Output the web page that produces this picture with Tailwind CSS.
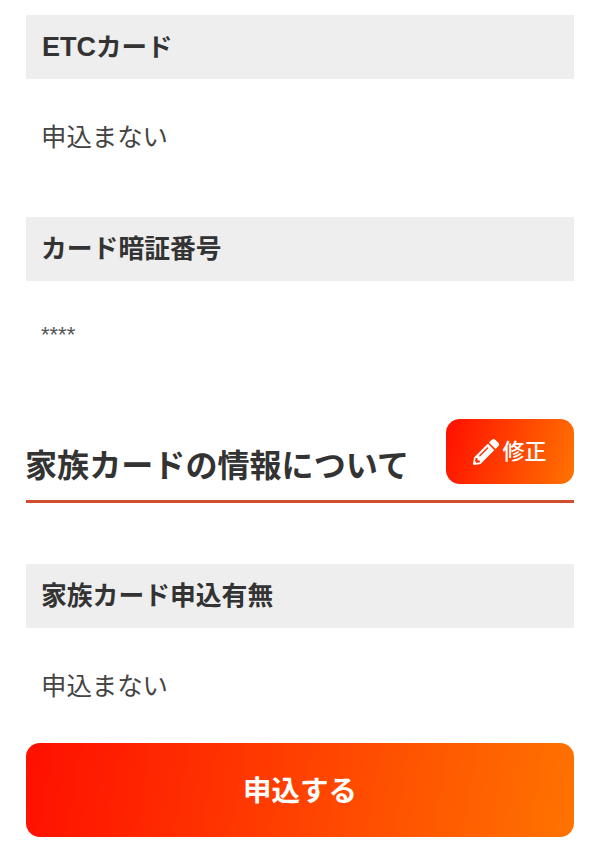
<!DOCTYPE html>
<html lang="ja">

<head>
  <meta charset="UTF-8">
  <meta name="viewport" content="width=device-width, initial-scale=1.0">
  <title>申込内容の確認</title>
  <script src="https://cdn.jsdelivr.net/npm/@tailwindcss/browser@4"></script>
</head>

<body class="bg-white text-[#333] font-['Liberation_Sans','Noto_Sans_CJK_JP',sans-serif] overflow-hidden">
  <main class="h-[865px] px-[26px] pt-[15px]">
    <h3 class="h-16 bg-[#eeeeee] pl-4 flex items-center text-[25.5px] font-bold"><span><span class="text-[27px]">ETC</span>カード</span></h3>
    <p class="h-[138px] pl-[15px] pt-10 text-[25.4px] leading-[36px] text-[#444]">申込まない</p>

    <h3 class="h-16 bg-[#eeeeee] pl-[15px] flex items-center text-[25.8px] font-bold">カード暗証番号</h3>
    <p class="h-[137px] pl-[15px] pt-[42px] text-[22px] leading-6 text-[#555]">****</p>

    <div class="relative h-[85px] border-b-[3px] border-[#d0502e]">
      <h2 class="absolute -left-px bottom-[11px] text-[32.1px] leading-[46px] font-bold whitespace-nowrap">家族カードの情報について</h2>
      <button class="absolute right-0 top-px w-[128px] h-[65px] rounded-[14px] bg-[linear-gradient(105deg,#ff0f00,#ff7300)] text-white flex items-center justify-center gap-[3px] text-[22px] font-medium">
        <svg class="w-[26px] h-[26px]" viewBox="0 0 512 512" fill="currentColor">
          <path d="M497.9 142.1l-46.1 46.1c-4.7 4.7-12.3 4.7-17 0l-111-111c-4.7-4.7-4.7-12.3 0-17l46.1-46.1c18.7-18.7 49.1-18.7 67.9 0l60.1 60.1c18.8 18.7 18.8 49.1 0 67.9zM284.2 99.8L21.6 362.4.4 483.9c-2.9 16.4 11.4 30.6 27.8 27.8l121.5-21.3 262.6-262.6c4.7-4.7 4.7-12.3 0-17l-111-111c-4.8-4.7-12.4-4.7-17.1 0zM124.1 339.9c-5.5-5.5-5.5-14.3 0-19.8l154-154c5.5-5.5 14.3-5.5 19.8 0s5.5 14.3 0 19.8l-154 154c-5.5 5.5-14.3 5.5-19.8 0zM88 424h48v36.3l-64.5 11.3-31.1-31.1L51.7 376H88v48z"/>
        </svg>
        <span>修正</span>
      </button>
    </div>

    <h3 class="mt-[61px] h-16 bg-[#eeeeee] pl-[15px] flex items-center text-[25.8px] font-bold">家族カード申込有無</h3>
    <p class="h-[115px] pl-[15px] pt-10 text-[25.4px] leading-[36px] text-[#444]">申込まない</p>

    <button class="w-full h-[94px] rounded-[14px] bg-[linear-gradient(100deg,#ff0f00,#ff7300)] text-white text-[28.5px] font-bold pt-0.5">申込する</button>
  </main>
</body>

</html>
